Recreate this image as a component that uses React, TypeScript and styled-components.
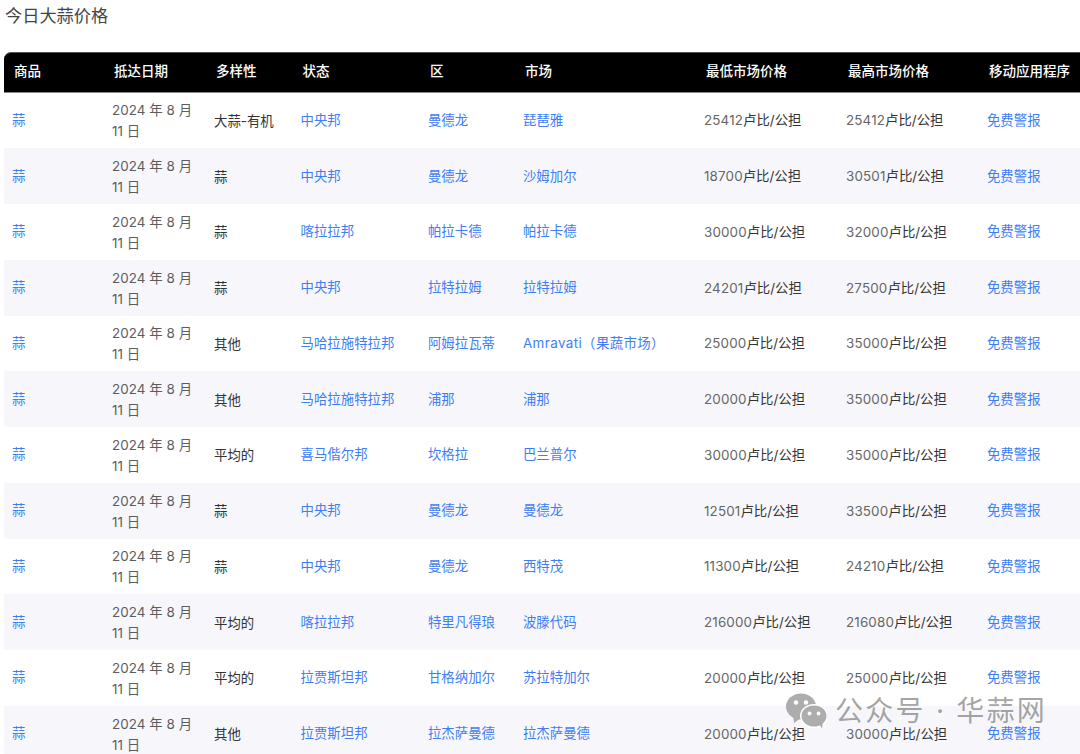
import React from "react";
import styled, { createGlobalStyle } from "styled-components";

const Global = createGlobalStyle`
  html, body { margin: 0; padding: 0; background: #fff; overflow: hidden; height: 754px; }
  body { font-family: Inter, "Noto Sans CJK SC", sans-serif; }
`;

const Page = styled.div`
  position: relative;
  width: 1080px;
  height: 754px;
  overflow: hidden;
  padding-left: 4px;
  box-sizing: border-box;
`;

const Title = styled.h2`
  margin: 0;
  padding: 4px 0 0 1px;
  height: 51.5px;
  box-sizing: border-box;
  font-size: 17.2px;
  line-height: 24px;
  font-weight: 400;
  color: #444;
`;

const Table = styled.table`
  width: 1076px;
  table-layout: fixed;
  border-collapse: separate;
  border-spacing: 0;
  font-size: 13.4px;
`;

const Head = styled.th`
  background: #000;
  color: #fff;
  height: 41px;
  padding: 0 0 4px 10px;
  box-sizing: border-box;
  text-align: left;
  font-size: 13.5px;
  font-weight: 500;
  white-space: nowrap;
  border-top: 1px solid #555;
  border-bottom: 1px solid #888;
  &:first-child { border-top-left-radius: 7px; }
`;

const Row = styled.tr<{ $alt: boolean }>`
  height: 55.75px;
  background: ${(p) => (p.$alt ? "#f7f7fb" : "#fff")};
`;

const Cell = styled.td`
  padding: 0 0 0 8px;
  box-sizing: border-box;
  line-height: 21px;
  color: #333;
`;

const DateCell = styled(Cell)`
  color: #5c5c5c;
  padding-top: 2px;
  padding-right: 6px;
  letter-spacing: 0.05px;
`;

const Variety = styled(Cell)`
  color: #333;
  padding-top: 2px;
`;

const Price = styled(Cell)`
  padding-top: 1px;
  white-space: nowrap;
`;

const Amount = styled.span`
  color: #666;
  letter-spacing: 0.15px;
`;

const Link = styled.a<{ $wide?: boolean }>`
  color: #3d7ef5;
  text-decoration: none;
  letter-spacing: ${(p) => (p.$wide ? "0.4px" : "0")};
`;

const Watermark = styled.div`
  position: absolute;
  left: 786px;
  top: 692px;
  display: flex;
  align-items: center;
  gap: 8px;
  color: rgba(130, 130, 130, 0.72);
  font-size: 28px;
  letter-spacing: 2.25px;
  line-height: 38px;
  white-space: nowrap;
`;

const widths = [100, 102, 86.6, 127.4, 95, 181, 142, 141, 101];
const headers = ["商品", "抵达日期", "多样性", "状态", "区", "市场", "最低市场价格", "最高市场价格", "移动应用程序"];
const rows: [string, string, string, string, string, string][] = [
  ["大蒜-有机", "中央邦", "曼德龙", "琵琶雅", "25412", "25412"],
  ["蒜", "中央邦", "曼德龙", "沙姆加尔", "18700", "30501"],
  ["蒜", "喀拉拉邦", "帕拉卡德", "帕拉卡德", "30000", "32000"],
  ["蒜", "中央邦", "拉特拉姆", "拉特拉姆", "24201", "27500"],
  ["其他", "马哈拉施特拉邦", "阿姆拉瓦蒂", "Amravati（果蔬市场）", "25000", "35000"],
  ["其他", "马哈拉施特拉邦", "浦那", "浦那", "20000", "35000"],
  ["平均的", "喜马偕尔邦", "坎格拉", "巴兰普尔", "30000", "35000"],
  ["蒜", "中央邦", "曼德龙", "曼德龙", "12501", "33500"],
  ["蒜", "中央邦", "曼德龙", "西特茂", "11300", "24210"],
  ["平均的", "喀拉拉邦", "特里凡得琅", "波滕代码", "216000", "216080"],
  ["平均的", "拉贾斯坦邦", "甘格纳加尔", "苏拉特加尔", "20000", "25000"],
  ["其他", "拉贾斯坦邦", "拉杰萨曼德", "拉杰萨曼德", "20000", "30000"],
];

const WeChat = () => (
  <svg width="41" height="36" viewBox="0 0 41 36" aria-hidden="true">
    <ellipse cx="15" cy="13.5" rx="15" ry="13" fill="#adadad" />
    <path d="M7 22 L8 30 L15 25 Z" fill="#adadad" />
    <ellipse cx="28" cy="23" rx="14" ry="12" fill="#fff" />
    <ellipse cx="28" cy="23" rx="12.5" ry="10.5" fill="#adadad" />
    <path d="M33 31 L36 35.5 L37 28 Z" fill="#adadad" />
    <circle cx="10" cy="9.5" r="2.2" fill="#fff" />
    <circle cx="20" cy="9.5" r="2.2" fill="#fff" />
    <circle cx="23.5" cy="20.5" r="1.9" fill="#fff" />
    <circle cx="32.5" cy="20.5" r="1.9" fill="#fff" />
  </svg>
);

export default function App() {
  return (
    <Page>
      <Global />
      <Title>今日大蒜价格</Title>
      <Table>
        <colgroup>
          {widths.map((w, i) => (
            <col key={i} style={{ width: w }} />
          ))}
        </colgroup>
        <thead>
          <tr>
            {headers.map((h) => (
              <Head key={h}>{h}</Head>
            ))}
          </tr>
        </thead>
        <tbody>
          {rows.map((r, i) => (
            <Row key={i} $alt={i % 2 === 1}>
              <Cell><Link>蒜</Link></Cell>
              <DateCell>2024 年 8 月 11 日</DateCell>
              <Variety>{r[0]}</Variety>
              <Cell><Link>{r[1]}</Link></Cell>
              <Cell><Link>{r[2]}</Link></Cell>
              <Cell><Link $wide={r[3].startsWith("A")}>{r[3]}</Link></Cell>
              <Price><Amount>{r[4]}</Amount>卢比/公担</Price>
              <Price><Amount>{r[5]}</Amount>卢比/公担</Price>
              <Cell><Link>免费警报</Link></Cell>
            </Row>
          ))}
        </tbody>
      </Table>
      <Watermark>
        <WeChat />
        <span>公众号 · 华蒜网</span>
      </Watermark>
    </Page>
  );
}
